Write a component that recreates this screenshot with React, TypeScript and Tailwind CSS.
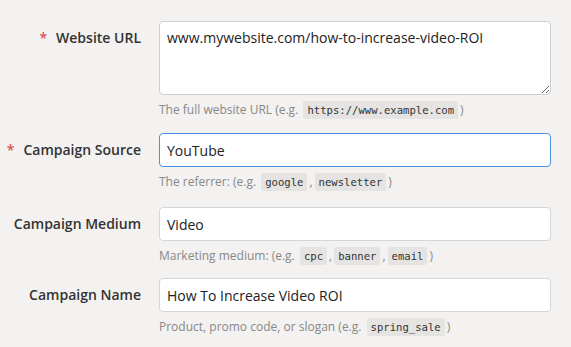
import React from "react";

const sans = { fontFamily: '"Open Sans", "Liberation Sans", sans-serif' };

function Code({ children }: { children: React.ReactNode }) {
  return (
    <code className="mx-[2px] inline-block rounded-[2px] bg-[#e5e4e2] px-[4px] text-[10.6px] leading-[18px] text-[#333] [font-family:'DejaVu_Sans_Mono',monospace]">
      {children}
    </code>
  );
}

function Row({
  label,
  required,
  children,
  help,
  className,
}: {
  label: string;
  required?: boolean;
  children: React.ReactNode;
  help: React.ReactNode;
  className?: string;
}) {
  return (
    <div className={"flex " + (className ?? "")}>
      <div className="w-[141px] shrink-0 whitespace-nowrap pt-[6px] text-right text-[14px] font-semibold leading-[22px] text-[#333]">
        {required && <span className="mr-[9px] text-[#d9534f]">*</span>}
        {label}
      </div>
      <div className="ml-[18px] w-[392px] shrink-0">
        {children}
        <div className="mt-[5px] whitespace-nowrap text-[12px] leading-[20px] text-[#888]">{help}</div>
      </div>
    </div>
  );
}

export default function App() {
  const input =
    "block h-[34px] w-full rounded-[4px] border bg-white px-[7px] text-[14px] text-[#222] outline-none";
  return (
    <div className="h-[347px] w-[571px] overflow-hidden bg-[#f3f2f0] pt-[21px]" style={sans}>
      <Row
        label="Website URL"
        required
        help={
          <>
            The full website URL (e.g. <Code>https://www.example.com</Code>)
          </>
        }
      >
        <textarea
          className="block h-[74px] w-full resize-y rounded-[4px] border border-[#cfcfcf] bg-white px-[7px] py-[5px] text-[14px] leading-[22px] text-[#222] outline-none"
          defaultValue="www.mywebsite.com/how-to-increase-video-ROI"
        />
      </Row>
      <Row
        label="Campaign Source"
        required
        className="mt-[13px]"
        help={
          <>
            The referrer: (e.g. <Code>google</Code>,<Code>newsletter</Code>)
          </>
        }
      >
        <input className={input + " border-[#4a90e2]"} defaultValue="YouTube" />
      </Row>
      <Row
        label="Campaign Medium"
        className="mt-[15px]"
        help={
          <>
            Marketing medium: (e.g. <Code>cpc</Code>,<Code>banner</Code>,<Code>email</Code>)
          </>
        }
      >
        <input className={input + " border-[#d6d6d6]"} defaultValue="Video" />
      </Row>
      <Row
        label="Campaign Name"
        className="mt-[12px]"
        help={
          <>
            Product, promo code, or slogan (e.g. <Code>spring_sale</Code>)
          </>
        }
      >
        <input className={input + " border-[#d6d6d6]"} defaultValue="How To Increase Video ROI" />
      </Row>
    </div>
  );
}
